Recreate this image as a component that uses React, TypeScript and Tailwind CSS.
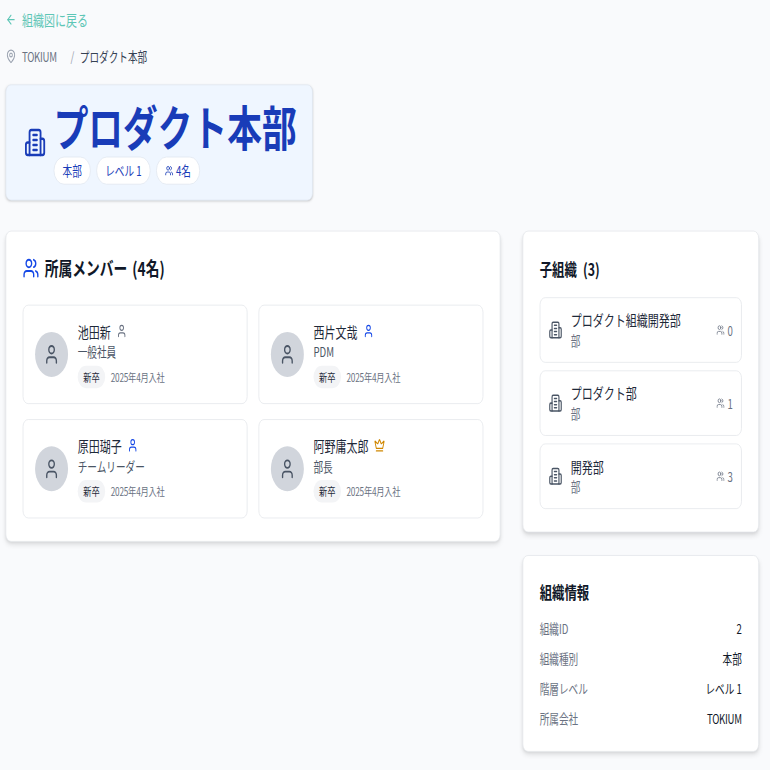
import { ArrowLeft, Crown, MapPin, User, Users } from 'lucide-react';

const members = [
  { name: '池田新', role: '一般社員', icon: 'plain' },
  { name: '西片文哉', role: 'PDM', icon: 'blue' },
  { name: '原田瑚子', role: 'チームリーダー', icon: 'blue' },
  { name: '阿野庸太郎', role: '部長', icon: 'crown' },
];

const children = [
  { name: 'プロダクト組織開発部', count: 0 },
  { name: 'プロダクト部', count: 1 },
  { name: '開発部', count: 3 },
];

const info = [
  { label: '組織ID', value: '2' },
  { label: '組織種別', value: '本部' },
  { label: '階層レベル', value: 'レベル 1' },
  { label: '所属会社', value: 'TOKIUM' },
];

// tower with two side wings, lucide's older Building2 shape
function Building({ className }: { className: string }) {
  return (
    <svg viewBox="0 0 24 24" fill="none" stroke="currentColor" strokeWidth="2" strokeLinecap="round" strokeLinejoin="round" className={className}>
      <path d="M6 22V4a2 2 0 0 1 2-2h8a2 2 0 0 1 2 2v18Z" />
      <path d="M6 12H4a2 2 0 0 0-2 2v6a2 2 0 0 0 2 2h2" />
      <path d="M18 9h2a2 2 0 0 1 2 2v9a2 2 0 0 1-2 2h-2" />
      <path d="M10 6h4" />
      <path d="M10 10h4" />
      <path d="M10 14h4" />
      <path d="M10 18h4" />
    </svg>
  );
}

function RoleIcon({ icon }: { icon: string }) {
  if (icon === 'crown') return <Crown className="w-4 h-4 text-yellow-600" />;
  if (icon === 'blue') return <User className="w-4 h-4 text-blue-700" />;
  return <User className="w-4 h-4 text-gray-500" />;
}

export default function App() {
  return (
    <div className="w-[770px] h-[770px] overflow-hidden bg-[#f9fafc]">
      {/* the capture is a 1120px page squeezed into a square */}
      <div className="w-[1120px] h-[822px] origin-top-left [transform:scale(0.6875,0.9375)] pl-2 pt-[9px] font-['Noto_Sans_CJK_JP',sans-serif] text-gray-900">
        <div className="flex items-center gap-2 text-[#5ec6b6] h-6">
          <ArrowLeft className="w-4 h-4" />
          <span>組織図に戻る</span>
        </div>

        <div className="flex items-center mt-[17px] h-5 text-sm">
          <MapPin className="w-4 h-4 text-gray-400 mr-2" />
          <span className="text-gray-500 tracking-[-0.4px]">TOKIUM</span>
          <span className="text-gray-400 ml-5 mr-2">/</span>
          <span className="text-gray-700">プロダクト本部</span>
        </div>

        <div className="w-[447px] mt-5 flex items-center gap-[11px] pl-[26px] pr-4 py-4 rounded-lg border border-slate-200 bg-blue-50 shadow-sm">
          <Building className="w-8 h-8 text-blue-800 shrink-0" />
          <div>
            <h1 className="text-[50.5px] leading-[54px] mb-[6px] font-bold text-blue-800 whitespace-nowrap">プロダクト本部</h1>
            <div className="flex gap-2 text-sm text-blue-800">
              <span className="px-3 py-1 rounded-full bg-white border border-slate-200">本部</span>
              <span className="px-3 py-1 rounded-full bg-white border border-slate-200">レベル 1</span>
              <span className="flex items-center gap-1 px-3 py-1 rounded-full bg-white border border-slate-200">
                <Users className="w-3 h-3" />
                4名
              </span>
            </div>
          </div>
        </div>

        <div className="w-[1096px] mt-8 grid grid-cols-3 gap-8 items-start">
          <div className="col-span-2 p-6 rounded-lg border border-gray-200 bg-white shadow-md">
            <h2 className="flex items-center gap-2 mt-[1px] mb-[25px] text-xl font-semibold [word-spacing:3px]">
              <Users className="w-6 h-6 text-blue-700" />
              所属メンバー (4名)
            </h2>
            <div className="grid grid-cols-2 gap-4">
              {members.map((m) => (
                <div key={m.name} className="flex items-center gap-[14px] pl-[17px] pr-4 py-4 rounded-lg border border-gray-200 bg-white">
                  <div className="w-12 h-12 rounded-full bg-gray-300 flex items-center justify-center shrink-0">
                    <User className="w-6 h-6 text-gray-600" />
                  </div>
                  <div>
                    <div className="flex items-center gap-2 -mt-px text-gray-800">
                      {m.name}
                      <RoleIcon icon={m.icon} />
                    </div>
                    <div className="text-sm text-gray-600">{m.role}</div>
                    <div className="flex items-center gap-2 mt-[5px] text-xs">
                      <span className="px-2 py-1 rounded-full bg-gray-100 text-gray-800">新卒</span>
                      <span className="text-gray-500 tracking-[-0.33px]">2025年4月入社</span>
                    </div>
                  </div>
                </div>
              ))}
            </div>
          </div>

          <div className="flex flex-col gap-6">
            <div className="p-6 rounded-lg border border-gray-200 bg-white shadow-md">
              <h2 className="mt-[1px] mb-[17px] text-lg leading-7 font-semibold [word-spacing:5px]">子組織 (3)</h2>
              <div className="flex flex-col gap-2">
                {children.map((c) => (
                  <div key={c.name} className="flex items-center justify-between p-3 rounded-lg border border-gray-200">
                    <div className="flex items-center gap-3">
                      <Building className="w-5 h-5 text-gray-600" />
                      <div className="-mt-px mb-px">
                        <div className="text-gray-800">{c.name}</div>
                        <div className="text-sm text-gray-500">部</div>
                      </div>
                    </div>
                    <div className="flex items-center gap-1 text-sm text-gray-500">
                      <Users className="w-3 h-3" />
                      {c.count}
                    </div>
                  </div>
                ))}
              </div>
            </div>

            <div className="px-6 pt-6 pb-[25px] rounded-lg border border-gray-200 bg-white shadow-md">
              <h2 className="mb-[15px] text-lg leading-7 font-semibold">組織情報</h2>
              <div className="flex flex-col gap-3 text-sm">
                {info.map((row) => (
                  <div key={row.label} className="flex justify-between">
                    <span className="text-gray-500">{row.label}</span>
                    <span className={row.value === 'TOKIUM' ? 'text-gray-900 tracking-[-0.4px]' : 'text-gray-900'}>{row.value}</span>
                  </div>
                ))}
              </div>
            </div>
          </div>
        </div>
      </div>
    </div>
  );
}
